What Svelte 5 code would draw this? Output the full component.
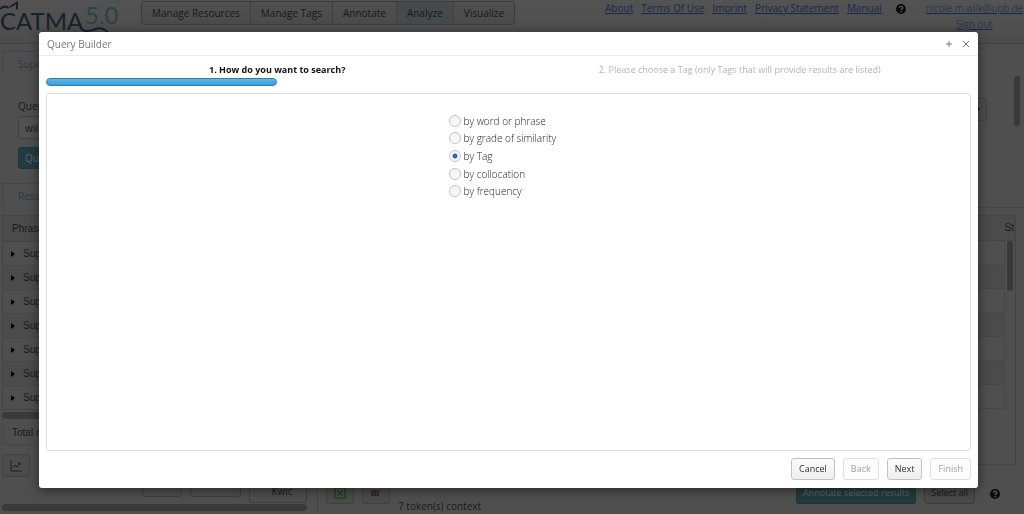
<script>
  const nav = ['Manage Resources', 'Manage Tags', 'Annotate', 'Analyze', 'Visualize'];
  const links = ['About', 'Terms Of Use', 'Imprint', 'Privacy Statement', 'Manual'];
  const rows = [1, 2, 3, 4, 5, 6, 7];
  const options = ['by word or phrase', 'by grade of similarity', 'by Tag', 'by collocation', 'by frequency'];
  let method = $state('by Tag');
  let progress = 25;
</script>

{#snippet help()}
  <svg class="help" viewBox="0 0 10 10" aria-hidden="true">
    <circle cx="5" cy="5" r="5" fill="#0b0b0b" />
    <path d="M3.3 3.8C3.4 1.8 6.8 1.8 6.8 3.8C6.8 4.9 5.2 4.9 5.2 6.1" fill="none" stroke="#5a5a5a" stroke-width="1.3" />
    <rect x="4.5" y="6.9" width="1.4" height="1.3" fill="#5a5a5a" />
  </svg>
{/snippet}

<div class="page">
  <header>
    <div class="logo">
      <svg class="mark" viewBox="0 0 124 36" aria-hidden="true">
        <path d="M0 9C3 6 6 6 9 8" fill="none" stroke="#16222d" stroke-width="2" />
        <path d="M10 7L17 2.5V9.5" fill="none" stroke="#16222d" stroke-width="2" />
        <path d="M80 27C84 33 88 31 93 30C99 27 105 28 108 33" fill="none" stroke="#16222d" stroke-width="2" />
      </svg>
      <span class="name">CATMA</span><span class="version">5.0</span>
    </div>
    <nav>
      {#each nav as item}
        <button class:active={item === 'Analyze'}>{item}</button>
      {/each}
    </nav>
    <div class="links">
      {#each links as link}<a href="#top">{link}</a>{/each}
      {@render help()}
    </div>
    <div class="account">
      <a href="#top">nicole.m.wilk@upb.de</a>
      <a href="#top">Sign out</a>
    </div>
  </header>

  <main>
    <section class="left">
      <div class="tab first">Supe</div>
      <form class="query">
        <label for="query">Query</label>
        <input id="query" value="wil" />
        <button type="button" class="primary">Query</button>
      </form>
      <div class="tab">Results</div>
      <table class="phrases">
        <thead><tr><th>Phrase</th></tr></thead>
        <tbody>
          {#each rows as row}
            <tr><td><svg class="caret" viewBox="0 0 4 6" aria-hidden="true"><path d="M0 0L4 3L0 6Z" /></svg>Supe</td></tr>
          {/each}
        </tbody>
      </table>
      <div class="hbar"></div>
      <div class="total">Total c</div>
      <button class="chart" aria-label="Chart">
        <svg viewBox="0 0 12 12" aria-hidden="true"><path d="M1 0V11H12M3 8L5 5L7 7L10 3M8 3H10V5" fill="none" stroke="#1c1c1c" /></svg>
      </button>
      <div class="tools">
        <button class="w40" aria-label="Expand"></button>
        <button class="w50" aria-label="Collapse"></button>
        <button class="kwic">Kwic</button>
      </div>
      <div class="hbar bottom"></div>
    </section>

    <section class="right">
      <div class="upper">
        <button class="drop" aria-label="Open list">
          <svg viewBox="0 0 6 4" aria-hidden="true"><path d="M0 0H6L3 4Z" /></svg>
        </button>
        <div class="vbar"></div>
      </div>
      <div class="grid">
        <div class="ghead">St</div>
        <div class="gbody">
          <div class="stripes">
            {#each rows as row}<div></div>{/each}
          </div>
          <div class="vbar"></div>
        </div>
      </div>
      <div class="actions">
        <button class="icon green" aria-label="Excel export">
          <svg viewBox="0 0 12 12" aria-hidden="true"><path d="M1 1H11V11H1ZM3.5 3.5L8.5 8.5M8.5 3.5L3.5 8.5" fill="none" stroke="#173d17" stroke-width="1.2" /></svg>
        </button>
        <button class="icon" aria-label="Text export">
          <svg viewBox="0 0 12 12" aria-hidden="true"><path d="M1 4H9M1 6H9M1 8H9" stroke="#291f30" stroke-width="1.4" stroke-dasharray="2.4 0.4" /><path d="M9 4L11 2" stroke="#291f30" /></svg>
        </button>
        <span class="context">7 token(s) context</span>
        <button class="primary">Annotate selected results</button>
        <button class="all">Select all</button>
        {@render help()}
      </div>
    </section>
  </main>
</div>

<div class="overlay">
  <div class="dialog" role="dialog" aria-labelledby="title">
    <div class="titlebar">
      <h1 id="title">Query Builder</h1>
      <button aria-label="Maximize"><svg viewBox="0 0 8 8" aria-hidden="true"><path d="M4 1V7M1 4H7" /></svg></button>
      <button aria-label="Close"><svg viewBox="0 0 8 8" aria-hidden="true"><path d="M1 1L7 7M7 1L1 7" /></svg></button>
    </div>
    <div class="content">
      <div class="steps">
        <div class="current">1. How do you want to search?</div>
        <div>2. Please choose a Tag (only Tags that will provide results are listed)</div>
      </div>
      <div class="progress" style="width: {progress}%"></div>
      <div class="panel">
        <div class="options" role="radiogroup" aria-labelledby="title">
          {#each options as option}
            <label><input type="radio" name="method" value={option} bind:group={method} />{option}</label>
          {/each}
        </div>
      </div>
      <footer>
        <button>Cancel</button>
        <button disabled>Back</button>
        <button>Next</button>
        <button disabled>Finish</button>
      </footer>
    </div>
  </div>
</div>

<style>
  :global(body) {
    margin: 0;
    background: #505050;
  }
  .page, .overlay {
    font: 10px/16px "Open Sans", sans-serif;
  }
  * {
    box-sizing: border-box;
  }
  button, input {
    font: inherit;
    color: inherit;
    margin: 0;
  }
  svg {
    display: block;
  }
  .page {
    height: 100vh;
    overflow: hidden;
    display: flex;
    flex-direction: column;
    color: #191919;
    background: #4f4f4f;
  }
  header {
    flex: none;
    display: flex;
    align-items: flex-start;
    height: 44px;
    border-bottom: 1px solid #404040;
    background: linear-gradient(#535353, #4d4d4d);
    white-space: nowrap;
  }
  .logo {
    flex: none;
    position: relative;
    width: 141px;
    display: flex;
    color: #16222d;
    font-family: Lato, sans-serif;
  }
  .mark {
    position: absolute;
    left: 0;
    top: 0;
    width: 124px;
    height: 36px;
  }
  .name {
    width: 85px;
    font-size: 24px;
    line-height: 42px;
  }
  .version {
    color: #2c4047;
    font-size: 24px;
    line-height: 30px;
  }
  nav {
    display: flex;
    margin-top: 1px;
    border: 1px solid #3c3c3c;
    border-radius: 3px;
    background: linear-gradient(#505050, #4b4b4b);
  }
  nav button {
    height: 22px;
    padding: 0 10px;
    border: 0;
    border-right: 1px solid #404040;
    background: none;
  }
  nav button:last-child {
    border-right: 0;
  }
  nav .active {
    background: #454b4b;
  }
  a {
    color: #18284c;
  }
  .links {
    margin-left: auto;
    display: flex;
    gap: 8px;
  }
  .help {
    width: 10px;
    height: 10px;
  }
  .links .help {
    margin: 4px 12px 0 6px;
  }
  .account {
    flex: none;
    min-width: 98px;
    padding: 0 1px 0 8px;
    display: flex;
    flex-direction: column;
    align-items: center;
    font-weight: 300;
  }
  main {
    flex: 1;
    display: grid;
    grid-template-columns: 318px 1fr;
  }
  .left {
    display: flex;
    flex-direction: column;
    border-right: 1px solid #444;
    padding: 7px 10px 0 2px;
  }
  .tab {
    width: 80px;
    height: 24px;
    padding: 4px 15px;
    border: 1px solid #464646;
    border-bottom: 0;
    color: #2b3a46;
  }
  .query {
    display: flex;
    flex-direction: column;
    align-items: flex-start;
    padding: 23px 0 14px 16px;
  }
  .query input {
    width: 160px;
    height: 23px;
    margin: 2px 0 8px;
    padding: 0 6px;
    border: 1px solid #404040;
    border-radius: 3px;
    background: #515151;
  }
  .primary {
    height: 22px;
    padding: 0 6px;
    border: 1px solid #20353a;
    border-radius: 3px;
    background: #233b41;
    color: #5c686b;
  }
  .phrases {
    margin-top: 8px;
    border: 1px solid #444;
    border-collapse: collapse;
    font: 10px/16px "Liberation Sans", sans-serif;
    text-align: left;
  }
  .phrases th {
    height: 26px;
    padding: 0 9px;
    font-weight: 400;
    background: #4b4b4b;
    border-bottom: 1px solid #444;
  }
  .phrases td {
    height: 24px;
    padding: 0 8px;
    border-top: 1px solid #484848;
  }
  .phrases tbody tr:nth-child(even) {
    background: #4b4b4b;
  }
  .caret {
    display: inline-block;
    width: 4px;
    height: 6px;
    margin-right: 8px;
  }
  .hbar {
    height: 7px;
    margin-top: 2px;
    border-radius: 4px;
    background: #3a3a3a;
  }
  .total {
    height: 26px;
    padding: 6px 9px 0;
    border: 1px solid #474747;
    border-top: 0;
    font-family: "Liberation Sans", sans-serif;
  }
  .chart {
    width: 28px;
    height: 23px;
    margin-top: 9px;
    padding: 0 7px;
    border: 1px solid #404040;
    border-radius: 3px;
    background: #4c4c4c;
  }
  .chart svg {
    width: 12px;
    height: 12px;
  }
  .tools {
    display: flex;
    justify-content: flex-end;
    gap: 8px;
    margin-top: 2px;
  }
  .tools button {
    height: 18px;
    border: 1px solid #3f3f3f;
    border-radius: 3px;
    background: #4e4e4e;
  }
  .tools .w40 {
    width: 40px;
  }
  .tools .w50 {
    width: 51px;
  }
  .tools .kwic {
    width: 58px;
    height: 24px;
    padding: 0 0 0 8px;
  }
  .bottom {
    flex: none;
    margin-top: 1px;
  }
  .right {
    display: flex;
    flex-direction: column;
    padding-left: 8px;
  }
  .upper {
    display: flex;
    justify-content: flex-end;
    align-items: flex-start;
    gap: 27px;
    height: 164px;
    padding: 32px 4px 0 0;
    border-bottom: 1px solid #464646;
  }
  .vbar {
    width: 6px;
    height: 50px;
    border-radius: 3px;
    background: #393939;
  }
  .drop {
    width: 28px;
    height: 23px;
    margin-top: 22px;
    border: 1px solid #404040;
    border-radius: 3px;
    background: #4c4c4c;
  }
  .drop svg {
    width: 6px;
    height: 4px;
    margin-left: auto;
  }
  .grid {
    margin: 7px 8px 0 0;
    height: 250px;
    border: 1px solid #434343;
  }
  .ghead {
    height: 25px;
    padding: 4px 1px;
    text-align: right;
    border-bottom: 1px solid #444;
    background: #4b4b4b;
    font: 10px/16px "Liberation Sans", sans-serif;
  }
  .gbody {
    display: flex;
    gap: 2px;
    padding-right: 2px;
  }
  .stripes {
    flex: 1;
    border-right: 1px solid #494949;
  }
  .stripes div {
    height: 24px;
    border-bottom: 1px solid #474747;
  }
  .stripes div:nth-child(even) {
    background: #4b4b4b;
  }
  .actions {
    display: flex;
    align-items: flex-start;
    gap: 8px;
    margin-top: 17px;
    padding-right: 24px;
    white-space: nowrap;
  }
  .icon {
    width: 28px;
    height: 22px;
    padding: 0 7px;
    border: 1px solid #414141;
    border-radius: 3px;
    background: #4c4c4c;
  }
  .green {
    background: #484c47;
  }
  .icon svg {
    width: 12px;
    height: 12px;
  }
  .context {
    margin: 16px auto 0 0;
  }
  .actions .primary {
    font-size: 9px;
  }
  .all {
    height: 22px;
    padding: 0 6px;
    font-size: 9px;
    border: 1px solid #3e3e3e;
    border-radius: 3px;
    background: #4b4b4b;
  }
  .actions .help {
    margin: 7px 0 0 7px;
  }

  .overlay {
    position: fixed;
    inset: 0;
    display: flex;
    padding: 32px 46px 26px 39px;
    color: #333;
  }
  .dialog {
    flex: 1;
    display: flex;
    flex-direction: column;
    border-radius: 3px;
    background: #fff;
    box-shadow: 0 2px 12px rgba(0, 0, 0, 0.5);
  }
  .titlebar {
    display: flex;
    align-items: center;
    gap: 9px;
    height: 24px;
    padding: 0 8px;
    border-bottom: 1px solid #ececec;
  }
  h1 {
    flex: 1;
    margin: 0;
    font: inherit;
    color: #777;
  }
  .titlebar button {
    width: 8px;
    height: 8px;
    padding: 0;
    border: 0;
    background: none;
  }
  .titlebar svg {
    width: 8px;
    height: 8px;
    stroke: #777;
  }
  .content {
    flex: 1;
    display: flex;
    flex-direction: column;
    padding: 6px 7px 8px;
  }
  .steps {
    display: grid;
    grid-template-columns: 1fr 1fr;
    text-align: center;
    font-size: 9px;
    color: #b4b4b4;
  }
  .current {
    color: #111;
    font-weight: 700;
  }
  .progress {
    height: 8px;
    margin: 0 0 7px;
    border: 1px solid #2d7fb2;
    border-radius: 4px;
    background: linear-gradient(#5fb8ea, #389bd6);
  }
  .panel {
    flex: 1;
    padding-top: 18px;
    border: 1px solid #dcdcdc;
    border-radius: 3px;
  }
  .options {
    display: grid;
    width: 120px;
    height: 88px;
    margin: 0 auto;
    color: #222;
    font-weight: 300;
    white-space: nowrap;
  }
  .options label {
    display: flex;
    align-items: center;
    gap: 3px;
  }
  .options input {
    appearance: none;
    width: 12px;
    height: 12px;
    border: 1px solid #c4c4c4;
    border-radius: 50%;
    background: linear-gradient(#f2f2f2, #fafafa);
  }
  .options input:checked {
    background: radial-gradient(circle, #2d62c8 2px, #f8f8f8 3px);
  }
  footer {
    display: flex;
    justify-content: flex-end;
    gap: 8px;
    margin-top: 7px;
    font-size: 9px;
  }
  footer button {
    height: 22px;
    padding: 0 7px;
    border: 1px solid #c2c2c2;
    border-radius: 3px;
    background: linear-gradient(#fbfbfb, #efefef);
  }
  footer button:disabled {
    color: #a2a2a2;
    border-color: #e0e0e0;
    background: #fcfcfc;
  }
</style>
